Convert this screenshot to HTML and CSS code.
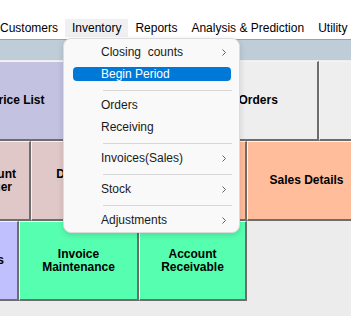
FILE: index.html
```html
<!DOCTYPE html>
<html>
<head>
    <title>Inventory</title>
    <meta charset="utf8" />
    <link rel="stylesheet" href="styles.css">
</head>
<body>
    <div class="window">
        <div class="menubar">
            <span class="menu-item">Customers</span>
            <span class="menu-item open">Inventory</span>
            <span class="menu-item">Reports</span>
            <span class="menu-item">Analysis &amp; Prediction</span>
            <span class="menu-item">Utility</span>
            <span class="menu-item">Help</span>
        </div>

        <div class="band"></div>

        <div class="tiles">
            <div class="row row-1">
                <div class="tile lavender w246">Price List</div>
                <div class="tile grey w178">Purchase Orders</div>
                <div class="tile grey w101"></div>
            </div>
            <div class="row row-2">
                <div class="tile pink w79">Account<br>Ledger</div>
                <div class="tile pink w108">Deliveries<br>Notes</div>
                <div class="tile peach w108">Sales</div>
                <div class="tile peach w120">Sales Details</div>
            </div>
            <div class="row row-3">
                <div class="tile violet w79">Receipts</div>
                <div class="tile green w120">Invoice<br>Maintenance</div>
                <div class="tile green w108">Account<br>Receivable</div>
            </div>
        </div>

        <div class="dropdown">
            <div class="drop-item"><span class="drop-label">Closing&nbsp; counts<svg class="chev" width="4" height="7" viewBox="0 0 4 7"><polyline points="0.5,0.5 3.5,3.5 0.5,6.5" /></svg></span></div>
            <div class="drop-item"><span class="drop-label active">Begin Period</span></div>
            <div class="drop-sep"></div>
            <div class="drop-item"><span class="drop-label">Orders</span></div>
            <div class="drop-item"><span class="drop-label">Receiving</span></div>
            <div class="drop-sep"></div>
            <div class="drop-item"><span class="drop-label">Invoices(Sales)<svg class="chev" width="4" height="7" viewBox="0 0 4 7"><polyline points="0.5,0.5 3.5,3.5 0.5,6.5" /></svg></span></div>
            <div class="drop-sep"></div>
            <div class="drop-item"><span class="drop-label">Stock<svg class="chev" width="4" height="7" viewBox="0 0 4 7"><polyline points="0.5,0.5 3.5,3.5 0.5,6.5" /></svg></span></div>
            <div class="drop-sep"></div>
            <div class="drop-item"><span class="drop-label">Adjustments<svg class="chev" width="4" height="7" viewBox="0 0 4 7"><polyline points="0.5,0.5 3.5,3.5 0.5,6.5" /></svg></span></div>
        </div>
    </div>
</body>
</html>
```

FILE: styles.css
```css
:root {
    --bg: #ececec;
    --band: #bfcdd9;
    --edge-dark: #6d6d6d;
    --edge-light: #f4f4f4;
    --accent: #0078d7;
}

* {
    box-sizing: border-box;
    margin: 0;
    padding: 0;
}

body {
    background: var(--bg);
    font-family: "Liberation Sans", Arial, sans-serif;
    overflow: hidden;
}

.window {
    position: relative;
    width: 351px;
    height: 316px;
    overflow: hidden;
}

/* menu bar */
.menubar {
    display: flex;
    background: #ffffff;
    padding: 19px 0 2px;
    margin-left: -7px;
    white-space: nowrap;
    border-bottom: 1px solid #a0a0a0;
}

.menu-item {
    height: 18px;
    line-height: 18px;
    padding: 0 7px;
    font-size: 12px;
    color: #000;
}

.menu-item.open {
    background: #f0f0f0;
}

.band {
    height: 20px;
    background: var(--band);
}

/* tile grid */
.tiles {
    padding-top: 1px;
}

.row {
    display: flex;
    height: 80px;
}

.row-1 { margin-left: -105px; }
.row-2 { margin-left: -46px; }
.row-3 { margin-left: -60px; }

.tile {
    flex: none;
    display: flex;
    align-items: center;
    justify-content: center;
    text-align: center;
    border-style: solid;
    border-width: 1px 2px 2px 1px;
    border-color: var(--edge-light) var(--edge-dark) var(--edge-dark) var(--edge-light);
    font-weight: bold;
    font-size: 12px;
    line-height: 13px;
    color: #000;
}

.w77 { width: 77px; }
.w79 { width: 79px; }
.w101 { width: 101px; }
.w108 { width: 108px; }
.w120 { width: 120px; }
.w178 { width: 178px; }
.w246 { width: 246px; }

.row-2 .w79 { width: 77px; }

.lavender { background: #c3c3e1; }
.grey { background: #eeeeee; }
.pink { background: #e1c8c8; }
.peach { background: #ffbd9b; }
.violet { background: #c0c0ff; }
.green { background: #55ffaf; }

/* dropdown */
.dropdown {
    position: absolute;
    left: 63px;
    top: 38px;
    width: 177px;
    padding: 2px 0 1px;
    background: #f9f9f9;
    border: 1px solid #dcdcdc;
    border-radius: 8px;
    box-shadow: 0 2px 6px rgba(0, 0, 0, 0.14);
}

.drop-item {
    height: 22px;
    padding: 4px 8px 4px 9px;
}

.drop-label {
    display: flex;
    align-items: center;
    height: 14px;
    padding: 0 5px 0 28px;
    border-radius: 4px;
    font-size: 12px;
    color: #1a1a1a;
    white-space: nowrap;
}

.drop-label.active {
    background: var(--accent);
    color: #ffffff;
}

.chev {
    margin-left: auto;
    fill: none;
    stroke: #606060;
    stroke-width: 1;
}

.drop-sep {
    height: 1px;
    margin: 5px 7px 3px 39px;
    background: #d7d7d7;
}
```
